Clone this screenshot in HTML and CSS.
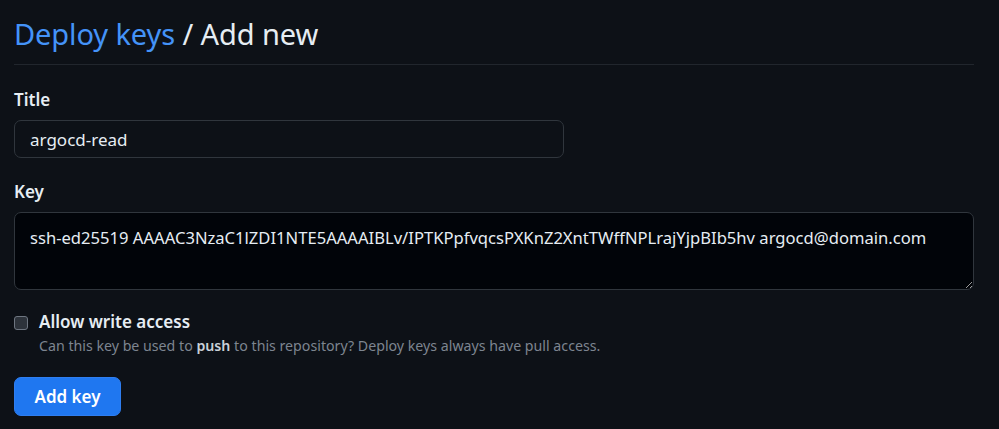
FILE: index.html
```html
<!DOCTYPE html>
<html>
<head>
<meta charset="utf-8">
<link rel="stylesheet" href="styles.css">
</head>
<body>
<div class="page">
  <h2 class="heading"><a class="crumb" href="#">Deploy keys</a> / Add new</h2>
  <form class="form">
    <div class="field">
      <label class="label">Title</label>
      <input class="input" type="text" value="argocd-read">
    </div>
    <div class="field">
      <label class="label">Key</label>
      <textarea class="textarea">ssh-ed25519 AAAAC3NzaC1lZDI1NTE5AAAAIBLv/IPTKPpfvqcsPXKnZ2XntTWffNPLrajYjpBIb5hv argocd@domain.com</textarea>
    </div>
    <div class="check">
      <span class="box"></span>
      <div class="check-text">
        <div class="check-label">Allow write access</div>
        <div class="note">Can this key be used to <b>push</b> to this repository? Deploy keys always have pull access.</div>
      </div>
    </div>
    <button class="btn" type="button">Add key</button>
  </form>
</div>
</body>
</html>
```
FILE: styles.css
```css
html, body {
  margin: 0;
  background: #0d1117;
  color: #e6edf3;
  font-family: "Noto Sans", "Open Sans", sans-serif;
}
.page {
  padding: 0 25px 0 14px;
  width: 960px;
}
.heading {
  margin: 0;
  padding: 14px 0 10px;
  font-size: 29px;
  font-weight: 400;
  line-height: 40px;
  letter-spacing: -0.1px;
  border-bottom: 1px solid #21262d;
  color: #e6edf3;
}
.crumb {
  color: #4493f8;
  text-decoration: none;
}
.form {
  padding-top: 24px;
}
.field {
  margin-bottom: 23px;
}
.label {
  display: block;
  font-size: 17px;
  font-weight: 600;
  line-height: 22px;
  margin-bottom: 9px;
}
.input {
  box-sizing: border-box;
  width: 550px;
  height: 38px;
  padding: 0 15px;
  border: 1px solid #30363d;
  border-radius: 7px;
  background: #0d1117;
  color: #e6edf3;
  font-family: inherit;
  font-size: 17px;
  outline: none;
}
.textarea {
  display: block;
  box-sizing: border-box;
  width: 960px;
  height: 78px;
  padding: 12px 15px;
  border: 1px solid #30363d;
  border-radius: 7px;
  background: #010409;
  color: #e6edf3;
  font-family: inherit;
  font-size: 16.6px;
  line-height: 26px;
  outline: none;
}
.check {
  display: flex;
  gap: 11px;
  margin-top: -4px;
}
.box {
  flex: none;
  box-sizing: border-box;
  width: 14px;
  height: 14px;
  margin-top: 7px;
  border: 1px solid #6e7681;
  border-radius: 3px;
  background: #2d333b;
}
.check-label {
  font-size: 17px;
  font-weight: 600;
  line-height: 26px;
}
.note {
  font-size: 14.2px;
  color: #7d8590;
  line-height: 22px;
}
.note b {
  color: #c9d1d9;
  font-weight: 600;
}
.btn {
  margin-top: 20px;
  box-sizing: border-box;
  width: 107px;
  height: 39px;
  border: 1px solid #2f7ef0;
  border-radius: 7px;
  background: #1f77f0;
  color: #ffffff;
  font-family: inherit;
  font-size: 17px;
  font-weight: 600;
  padding: 0;
}
```
